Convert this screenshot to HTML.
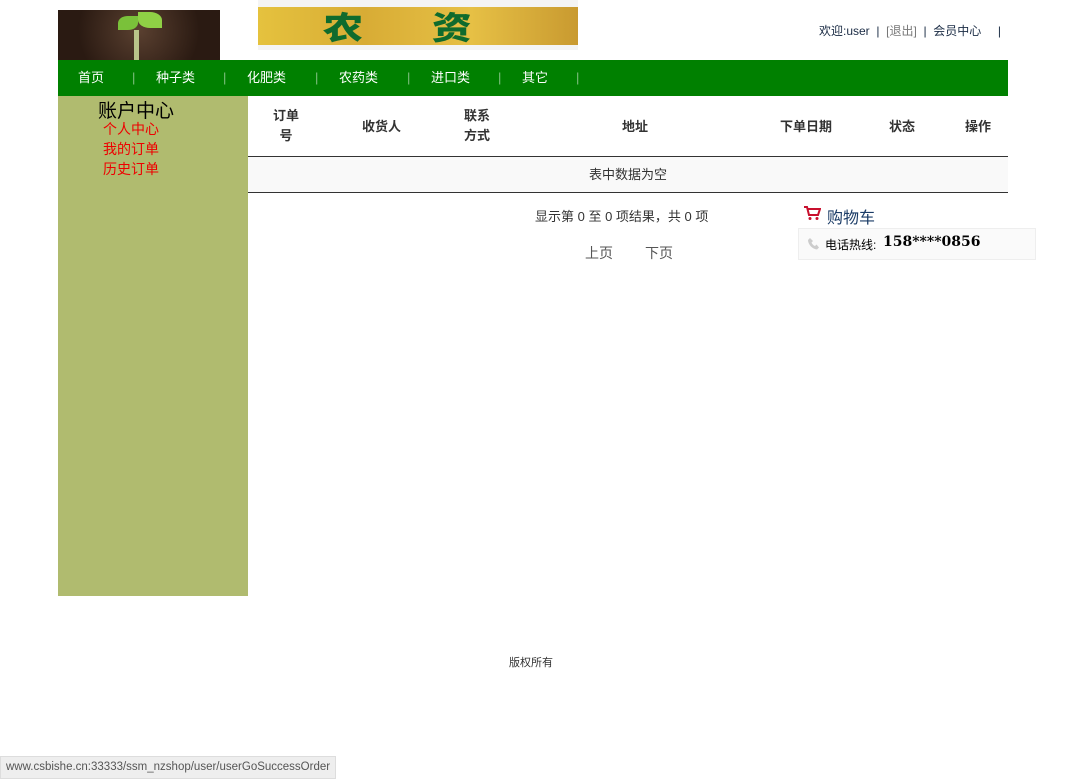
<!DOCTYPE html>
<html><head><meta charset="utf-8"><style>
body{margin:0;width:1066px;height:778px;background:#fff;font-family:"Liberation Sans","Noto Sans CJK SC",sans-serif;position:relative;overflow:hidden;font-size:13px}
.a{position:absolute}
</style></head><body>
<div class="a" style="left:58px;top:10px;width:162px;height:50px;background:radial-gradient(circle at 50% 40%,#5a4030,#2a1a12 70%)">
 <div class="a" style="left:76px;top:20px;width:5px;height:30px;background:#b9c48a"></div>
 <div class="a" style="left:60px;top:6px;width:20px;height:14px;background:#7ac13a;border-radius:50% 0 50% 0"></div>
 <div class="a" style="left:80px;top:2px;width:24px;height:16px;background:#8fd045;border-radius:0 50% 0 50%"></div>
</div>
<div class="a" style="left:258px;top:0;width:320px;height:50px;background:#f4f4f4"></div>
<div class="a" style="left:258px;top:7px;width:320px;height:38px;background:linear-gradient(90deg,#e5c23e,#d8ac35,#e6c045,#c99a30);color:#0f6b2d;font-size:32px;font-weight:900;line-height:38px;font-family:'Noto Sans CJK SC',sans-serif;transform:scaleX(1.25);transform-origin:0 0;width:256px"><span style="margin-left:52px">农</span><span style="margin-left:55px">资</span></div>
<div class="a" style="left:819px;top:22px;font-size:12px;color:#1a2b44;white-space:nowrap">欢迎:user &nbsp;| &nbsp;<span style="color:#777">[退出]</span>&nbsp; | &nbsp;会员中心 &nbsp; &nbsp;&nbsp;|</div>
<div class="a" style="left:58px;top:60px;width:950px;height:36px;background:#008000;color:#fff;font-size:13px;line-height:36px">
<span class="a" style="left:20px">首页</span><span class="a" style="left:74px;color:#7fbf7f">|</span>
<span class="a" style="left:98px">种子类</span><span class="a" style="left:165px;color:#7fbf7f">|</span>
<span class="a" style="left:189px">化肥类</span><span class="a" style="left:257px;color:#7fbf7f">|</span>
<span class="a" style="left:281px">农药类</span><span class="a" style="left:349px;color:#7fbf7f">|</span>
<span class="a" style="left:373px">进口类</span><span class="a" style="left:440px;color:#7fbf7f">|</span>
<span class="a" style="left:464px">其它</span><span class="a" style="left:518px;color:#7fbf7f">|</span>
</div>
<div class="a" style="left:58px;top:96px;width:190px;height:500px;background:#b0bb6f">
 <div class="a" style="left:40px;top:0px;font-size:19px;color:#000">账户中心</div>
 <div class="a" style="left:45px;top:23px;font-size:14px;color:#e00;line-height:20px">个人中心<br>我的订单<br>历史订单</div>
</div>
<div class="a" style="left:248px;top:96px;width:760px;height:60px;border-bottom:1px solid #333;font-weight:bold;color:#333;font-size:13px">
 <div class="a" style="left:25px;top:10px;line-height:20px;text-align:center">订单<br>号</div>
 <div class="a" style="left:114px;top:20px">收货人</div>
 <div class="a" style="left:216px;top:10px;line-height:20px;text-align:center">联系<br>方式</div>
 <div class="a" style="left:374px;top:20px">地址</div>
 <div class="a" style="left:532px;top:20px">下单日期</div>
 <div class="a" style="left:641px;top:20px">状态</div>
 <div class="a" style="left:717px;top:20px">操作</div>
</div>
<div class="a" style="left:248px;top:157px;width:760px;height:35px;background:#f9f9f9;border-bottom:1px solid #333;text-align:center;line-height:35px;color:#333">表中数据为空</div>
<div class="a" style="left:535px;top:206px;color:#333">显示第 0 至 0 项结果，共 0 项</div>
<div class="a" style="left:585px;top:243px;color:#555;font-size:14px">上页</div>
<div class="a" style="left:645px;top:243px;color:#555;font-size:14px">下页</div>
<svg class="a" style="left:804px;top:206px" width="17" height="15" viewBox="0 0 17 15"><path d="M0 1h3l2 8h9l2-6H4" fill="none" stroke="#c8102e" stroke-width="2"/><circle cx="6" cy="12.5" r="1.5" fill="#c8102e"/><circle cx="13" cy="12.5" r="1.5" fill="#c8102e"/></svg>
<div class="a" style="left:827px;top:204px;color:#1a3b66;font-size:16px">购物车</div>
<div class="a" style="left:798px;top:228px;width:236px;height:30px;background:#fafafa;border:1px solid #eee">
 <svg class="a" style="left:9px;top:9px" width="11" height="12" viewBox="0 0 11 12"><path d="M2 0l3 3-1.5 1.5c.5 1.5 2 3 3.5 3.5L8.5 6.5l2.5 3-2 2C4 11 0 6 0 2z" fill="#ccc"/></svg>
 <span class="a" style="left:26px;top:7px;font-size:12px;color:#000">电话热线:</span>
 <span class="a" style="left:84px;top:5px;font-size:14px;font-weight:bold;font-family:'DejaVu Serif',serif;color:#000">158****0856</span>
</div>
<div class="a" style="left:509px;top:654px;font-size:11px;color:#333">版权所有</div>
<div class="a" style="left:0;top:756px;height:21px;padding:0 5px;background:#eee;border:1px solid #ddd;color:#555;font-size:11.5px;line-height:21px">www.csbishe.cn:33333/ssm_nzshop/user/userGoSuccessOrder</div>
</body></html>
